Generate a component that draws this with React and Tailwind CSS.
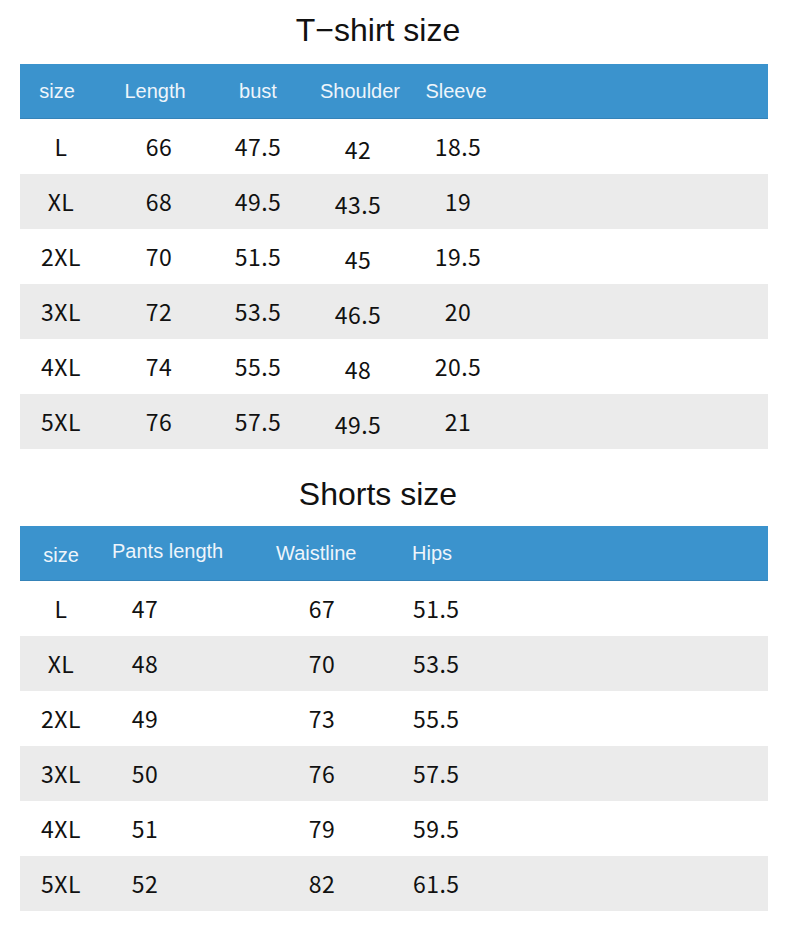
import React from 'react';

const TSHIRT = [
  ['L', '66', '47.5', '42', '18.5'],
  ['XL', '68', '49.5', '43.5', '19'],
  ['2XL', '70', '51.5', '45', '19.5'],
  ['3XL', '72', '53.5', '46.5', '20'],
  ['4XL', '74', '55.5', '48', '20.5'],
  ['5XL', '76', '57.5', '49.5', '21'],
];

const SHORTS = [
  ['L', '47', '67', '51.5'],
  ['XL', '48', '70', '53.5'],
  ['2XL', '49', '73', '55.5'],
  ['3XL', '50', '76', '57.5'],
  ['4XL', '51', '79', '59.5'],
  ['5XL', '52', '82', '61.5'],
];

const headFont = { fontFamily: '"Liberation Sans", Arial, sans-serif' };
const cellFont = { fontFamily: '"Noto Sans CJK SC", "Noto Sans", sans-serif' };

const Title = ({ children, className }) => (
  <div className={`flex items-center justify-center pr-[34px] ${className}`}>
    <h2 className="text-[32px] leading-none text-[#111]" style={headFont}>
      {children}
    </h2>
  </div>
);

const App = () => {
  return (
    <div className="w-[790px] h-[933px] bg-white">
      {/* T-shirt */}
      <Title className="h-16 pb-[4px]">T−shirt size</Title>
      <div className="mx-5 w-[748px]">
        <div
          className="flex h-[55px] items-center bg-[#3b93cd] border-b border-[#3583b8] text-[20px] text-[#eef5fb]"
          style={headFont}
        >
          <div className="w-[82px] text-center pr-2">size</div>
          <div className="w-[114px] text-center pr-2">Length</div>
          <div className="w-[84px] text-center">bust</div>
          <div className="w-[116px] text-center pl-1">Shoulder</div>
          <div className="w-[84px] text-center pr-1">Sleeve</div>
        </div>
        {TSHIRT.map((r, i) => (
          <div
            key={r[0]}
            className={`flex h-[55px] items-center text-[23px] tracking-[0.02em] text-[#111] ${i % 2 ? 'bg-[#ebebeb]' : 'bg-white'}`}
            style={cellFont}
          >
            <div className="w-[82px] text-center">{r[0]}</div>
            <div className="w-[114px] text-center">{r[1]}</div>
            <div className="w-[84px] text-center">{r[2]}</div>
            <div className="w-[116px] text-center pt-[5px]">{r[3]}</div>
            <div className="w-[84px] text-center">{r[4]}</div>
          </div>
        ))}
      </div>

      {/* Shorts */}
      <Title className="h-[77px] pt-[12px]">Shorts size</Title>
      <div className="mx-5 w-[748px]">
        <div
          className="flex h-[55px] items-center bg-[#3b93cd] border-b border-[#3583b8] text-[20px] text-[#eef5fb]"
          style={headFont}
        >
          <div className="w-[82px] text-center pt-1">size</div>
          <div className="w-[174px] pl-[10px] pb-1">Pants length</div>
          <div className="w-[136px]">Waistline</div>
          <div>Hips</div>
        </div>
        {SHORTS.map((r, i) => (
          <div
            key={r[0]}
            className={`flex h-[55px] items-center text-[23px] tracking-[0.02em] text-[#111] ${i % 2 ? 'bg-[#ebebeb]' : 'bg-white'}`}
            style={cellFont}
          >
            <div className="w-[82px] text-center">{r[0]}</div>
            <div className="w-[86px] text-center">{r[1]}</div>
            <div className="w-[224px] pl-[44px] text-center">{r[2]}</div>
            <div className="pl-[1px]">{r[3]}</div>
          </div>
        ))}
      </div>
    </div>
  );
};

export default App;
